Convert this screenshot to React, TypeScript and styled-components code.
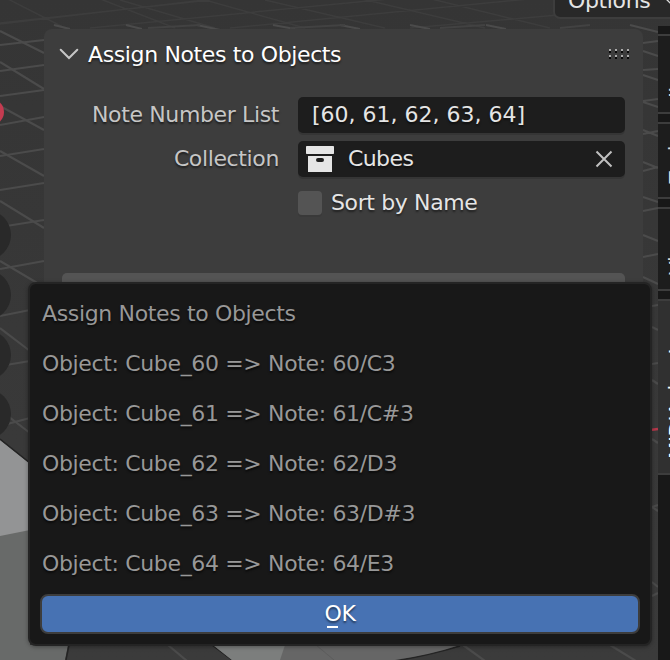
import React from 'react';
import styled, { createGlobalStyle } from 'styled-components';

const Global = createGlobalStyle`
  * { box-sizing: border-box; }
  body { margin: 0; background: #393939; font-family: "DejaVu Sans", sans-serif; font-size: 22px; overflow: hidden; }
`;

const Viewport = styled.main`
  position: relative;
  width: 670px;
  height: 660px;
  overflow: hidden;
  line-height: 30px;
  letter-spacing: -0.37px;
`;

const Scene = styled.svg`
  position: absolute;
  inset: 0;
`;

const OptionsButton = styled.div`
  position: absolute;
  left: 553px;
  top: -18px;
  width: 140px;
  height: 37px;
  padding: 0 13px;
  display: flex;
  align-items: center;
  gap: 14px;
  border: 2px solid #3d3d3d;
  border-radius: 7px;
  background: #282828;
  color: #e5e5e5;
`;

const Panel = styled.section`
  position: absolute;
  left: 44px;
  top: 29px;
  width: 599px;
  height: 300px;
  padding: 0 18px;
  border-radius: 8px;
  background: #3d3d3d;
  text-shadow: 0 2px 2px rgba(0, 0, 0, 0.5);
`;

const PanelHeader = styled.header`
  display: flex;
  align-items: center;
  height: 50px;
  margin-right: -7px;
  color: #fff;
`;

const Title = styled.span`
  padding-top: 2px;
`;

const Chevron = styled.svg`
  margin-left: -4px;
  margin-right: 9px;
  flex: none;
`;

const Grip = styled.svg`
  margin-left: auto;
`;

const Fields = styled.div`
  display: grid;
  grid-template-columns: 217px 327px;
  column-gap: 19px;
  row-gap: 8px;
  margin-top: 18px;
  align-items: center;
`;

const Label = styled.label`
  color: #c6c6c6;
  text-align: right;
`;

const Field = styled.div<{ $icon?: boolean }>`
  display: flex;
  align-items: center;
  height: 36px;
  padding: 0 12px 0 ${p => (p.$icon ? '8px' : '14px')};
  border-radius: 5px;
  background: #1d1d1d;
  color: #e5e5e5;
  box-shadow: 0 2px 0 #353535;
  letter-spacing: ${p => (p.$icon ? '-0.6px' : '0')};
`;

const Value = styled.span`
  flex: 1;
  margin-left: 14px;
`;

const CheckRow = styled.div`
  grid-column: 2;
  display: flex;
  align-items: center;
  gap: 9px;
  height: 36px;
  color: #e5e5e5;
`;

const Checkbox = styled.span`
  width: 24px;
  height: 24px;
  border-radius: 4px;
  background: #545454;
  box-shadow: 0 2px 0 #393939;
`;

const ActionButton = styled.div`
  height: 36px;
  margin-top: 52px;
  width: 563px;
  border-radius: 5px;
  background: #545454;
`;

const TabStrip = styled.aside`
  position: absolute;
  left: 658px;
  top: 26px;
  width: 40px;
  height: 634px;
  padding-top: 8px;
  display: flex;
  flex-direction: column;
  gap: 8px;
  background: #181818;
`;

const Tab = styled.div<{ $h: number; $active?: boolean }>`
  display: flex;
  align-items: flex-end;
  flex: none;
  height: ${p => p.$h}px;
  padding: 0 0 14px 3px;
  border: solid #3d3d3d;
  border-width: 2px 0;
  background: ${p => (p.$active ? '#303030' : '#1d1d1d')};
  color: ${p => (p.$active ? '#fff' : '#d8d8d8')};
`;

const TabText = styled.span`
  writing-mode: vertical-rl;
  transform: rotate(180deg);
  white-space: nowrap;
  font-size: 20px;
`;

const Dialog = styled.section`
  position: absolute;
  left: 28px;
  top: 282px;
  width: 624px;
  height: 364px;
  padding: 5px 11px 9px 12px;
  border: 2px solid #242424;
  border-radius: 8px;
  background: #181818;
  color: #989898;
  box-shadow: 0 1px 4px rgba(0, 0, 0, 0.35);
  text-shadow: 0 2px 2px rgba(0, 0, 0, 0.6);
`;

const Line = styled.div`
  display: flex;
  align-items: center;
  height: 50px;
  letter-spacing: -0.35px;
`;

const OkButton = styled.button`
  display: flex;
  align-items: center;
  justify-content: center;
  width: 600px;
  height: 40px;
  margin: 5px 0 0 -2px;
  padding: 0;
  border: 2px solid #3d3d3d;
  border-radius: 8px;
  background: #4772b3;
  color: #fff;
  font: inherit;
  letter-spacing: -0.3px;
  text-shadow: 0 2px 2px rgba(0, 0, 0, 0.5);
`;

const Accel = styled.span`
  position: relative;
  &::after {
    content: '';
    position: absolute;
    left: 3px;
    bottom: -2px;
    width: 11px;
    height: 2px;
    background: #fff;
  }
`;

const objects = [
  ['60', 'C3'], ['61', 'C#3'], ['62', 'D3'], ['63', 'D#3'], ['64', 'E3'],
];

function Background() {
  return (
    <Scene width="670" height="660" viewBox="0 0 670 660">
      <defs>
        <linearGradient id="haze" x2="0" y2="1">
          <stop stopColor="#353535" /><stop offset="1" stopColor="#3b3b3b" />
        </linearGradient>
      </defs>
      <rect width="670" height="660" fill="url(#haze)" />
      <g stroke="#3d3d3d" strokeWidth="1.5">
        <path d="M0 23 210 0M0 24 340 -16M90 28 430 -5M230 28 560 -4M410 28 558 15M0 -5 65 28M90 -5 175 28M120 0 215 28M205 0 305 28M265 0 385 28M345 -5 485 28M415 -5 550 28" />
      </g>
      <g stroke="#4b4b4b" strokeWidth="2.2" fill="none">
        <path d="M0 45 44 40M0 71 44 65M0 96 44 90M0 125 44 117M0 156 44 149M0 190 44 183M0 227 44 220M0 269 44 261M0 316 30 310M0 366 30 361M0 426 30 418" />
        <path d="M0 31 44 53M0 62 44 89M0 106 44 130M0 151 44 176M0 201 44 228M0 261 44 287M0 328 30 351M0 410 30 433" />
        <path d="M54 25 70 29M126 25 142 29M197 25 220 30M273 25 295 29M340 25 360 29M410 25 430 29M486 25 506 29M630 25 658 32" />
        <path d="M148 28 200 25M290 28 345 25M440 28 485 25M560 28 590 25" stroke="#424242" />
        <path d="M643 43 658 41M643 51 658 56M643 70 658 69M643 75 658 80M643 101 658 99M643 102 658 107M643 134 658 131M643 130 658 136M643 162 658 168M643 171 658 167M643 197 658 202M643 211 658 208M643 235 658 241M643 257 658 254M643 277 658 284M652 306 658 305M652 327 658 330M652 364 658 363M652 380 658 384M652 439 658 443M652 507 658 505M652 507 658 511M652 582 658 587M652 596 658 593M610 645 636 661M463 645 485 661M168 645 187 661" />
      </g>
      <path d="M650 430 658 429" stroke="#b5384b" strokeWidth="2.5" />
      <path d="M0 440 30 464V645H68L65 660H0Z" fill="#686a69" />
      <path d="M0 440 30 464V530L0 536Z" fill="#939495" />
      <path d="M0 439 30 463M69 645 66 660M212 645 232 660M460 646Q430 655 395 661" stroke="#242424" strokeWidth="1.5" fill="none" />
      <path d="M213 645H460Q430 655 395 660H232Z" fill="#666" />
      <path d="M213 645H285L280 660H232Z" fill="#7c7e7d" />
      <path d="M316 645 334 660" stroke="#5d5d5d" />
      <g fill="#292929">
        <circle cx="-14" cy="235" r="25" /><circle cx="-14" cy="295" r="25" />
        <circle cx="-14" cy="355" r="25" /><circle cx="-14" cy="414" r="25" />
      </g>
      <circle cx="-9" cy="112" r="13" fill="#c43b50" />
    </Scene>
  );
}

export default function App() {
  return (
    <Viewport>
      <Global />
      <Background />
      <OptionsButton>
        Options
        <svg width="20" height="12" viewBox="0 0 20 12" fill="none" stroke="#ddd" strokeWidth="2"><path d="M1 1 10 10 19 1" /></svg>
      </OptionsButton>
      <Panel>
        <PanelHeader>
          <Chevron width="21" height="14" viewBox="0 0 21 14" fill="none" stroke="#c6c6c6" strokeWidth="2" strokeLinecap="round">
            <path d="M2.7 2.7 11 11 19.3 2.7" />
          </Chevron>
          <Title>Assign Notes to Objects</Title>
          <Grip width="23" height="12" viewBox="0 0 23 12" shapeRendering="crispEdges">
            {[0, 6, 12, 18].map(x => [1, 7].map(y => (
              <g key={`${x}-${y}`}>
                <rect x={x} y={y} width="2" height="2" fill="#aaa" />
                <rect x={x} y={y + 2} width="2" height="2" fill="#080808" />
              </g>
            )))}
          </Grip>
        </PanelHeader>
        <Fields>
          <Label>Note Number List</Label>
          <Field>[60, 61, 62, 63, 64]</Field>
          <Label>Collection</Label>
          <Field $icon>
            <svg width="28" height="26" viewBox="0 0 28 26" fill="#e5e5e5">
              <rect width="28" height="8" rx=".7" />
              <path fillRule="evenodd" d="M2 10H26V26H2ZM12 12Q10 12 10 14T12 16H16Q18 16 18 14T16 12Z" />
            </svg>
            <Value>Cubes</Value>
            <svg width="18" height="18" viewBox="0 0 18 18" stroke="#c0c0c0" strokeWidth="2"><path d="M1.5 1.5 16.5 16.5M16.5 1.5 1.5 16.5" /></svg>
          </Field>
          <CheckRow><Checkbox />Sort by Name</CheckRow>
        </Fields>
        <ActionButton />
      </Panel>
      <TabStrip>
        <Tab $h={80}><TabText>Item</TabText></Tab>
        <Tab $h={77}><TabText>Tool</TabText></Tab>
        <Tab $h={84}><TabText>View</TabText></Tab>
        <Tab $h={176} $active><TabText>MIDIAnimator</TabText></Tab>
      </TabStrip>
      <Dialog>
        <Line>Assign Notes to Objects</Line>
        {objects.map(([n, note]) => (
          <Line key={n}>Object: Cube_{n} =&gt; Note: {n}/{note}</Line>
        ))}
        <OkButton><span><Accel>O</Accel>K</span></OkButton>
      </Dialog>
    </Viewport>
  );
}
